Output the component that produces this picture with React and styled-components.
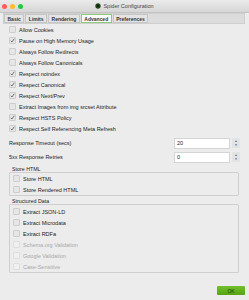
import styled, { createGlobalStyle } from "styled-components";

const Global = createGlobalStyle`
  html, body { margin: 0; padding: 0; background: #ececec; }
  body { font-family: "Liberation Sans", Arial, sans-serif; color: #222; }
`;

const Window = styled.div`
  width: 249px;
  height: 300px;
  background: #ececec;
  display: flex;
  flex-direction: column;
  overflow: hidden;
  font-size: 5.5px;
`;

const TitleBar = styled.div`
  height: 12px;
  display: flex;
  align-items: center;
  position: relative;
  background: linear-gradient(#ebebeb, #d6d6d6);
  border-bottom: 1px solid #c4c4c4;
`;

const Lights = styled.div`
  display: flex;
  gap: 3px;
  padding-left: 2px;
`;

const Light = styled.span`
  width: 5px;
  height: 5px;
  border-radius: 50%;
  background: ${(p) => p.c};
`;

const Title = styled.div`
  position: absolute;
  left: 0;
  right: 0;
  display: flex;
  justify-content: center;
  align-items: center;
  gap: 2px;
  color: #444;
  font-size: 5.5px;
`;

const TabBar = styled.div`
  margin: 0 4px 0 3px;
  height: 9px;
  background: #dcdcdc;
  border: 1px solid #cfcfcf;
  display: flex;
`;

const Tab = styled.div`
  padding: 0 2.5px;
  display: flex;
  align-items: center;
  font-weight: bold;
  font-size: 5px;
  color: #333;
  border: 1px solid ${(p) => (p.active ? "#8fc97a" : "#c6c6c6")};
  background: ${(p) => (p.active ? "#fafafa" : "#e4e4e4")};
  margin-right: 1px;
`;

const Body = styled.div`
  padding: 0 9px;
  display: flex;
  flex-direction: column;
`;

const Row = styled.div`
  height: 11px;
  display: flex;
  align-items: center;
  gap: 3px;
  color: ${(p) => (p.disabled ? "#a8a8a8" : "#222")};
`;

const Box = styled.span`
  width: 5px;
  height: 5px;
  border: 1px solid ${(p) => (p.disabled ? "#dedede" : "#cdcdcd")};
  background: ${(p) => (p.disabled ? "#f0f0f0" : "#e6e6e6")};
  border-radius: 1px;
  display: flex;
  align-items: center;
  justify-content: center;
  flex-shrink: 0;
`;

const FieldRow = styled.div`
  height: 14px;
  display: flex;
  align-items: center;
  justify-content: space-between;
  margin-top: ${(p) => (p.first ? "2px" : "0")};
`;

const Spin = styled.div`
  display: flex;
  align-items: center;
  gap: 2px;
`;

const Input = styled.div`
  width: 52px;
  height: 9px;
  background: #fff;
  border: 1px solid #d4d4d4;
  display: flex;
  align-items: center;
  padding-left: 2px;
`;

const Stepper = styled.div`
  width: 8px;
  height: 10px;
  background: #e3e3e3;
  border-radius: 1px;
  display: flex;
  flex-direction: column;
  align-items: center;
  justify-content: center;
  font-size: 3px;
  line-height: 4px;
  color: #555;
`;

const Group = styled.div`
  margin-top: 3px;
  display: flex;
  flex-direction: column;
`;

const Legend = styled.div`
  font-size: 5.3px;
  padding-left: 3px;
  height: 5px;
  line-height: 5px;
`;

const Frame = styled.div`
  border: 1px solid #cfcfcf;
  border-radius: 1px;
  padding: ${(p) => p.pad || "1px 0 0 3px"};
  margin-right: 1px;
`;

const Footer = styled.div`
  display: flex;
  justify-content: flex-end;
  padding: 13px 4px 0 0;
`;

const OkButton = styled.div`
  width: 28px;
  height: 9px;
  background: linear-gradient(#72c02c, #55a313);
  border-radius: 1px;
  display: flex;
  align-items: center;
  justify-content: center;
  color: #1e3a08;
  font-size: 5px;
`;

const Check = () => (
  <svg width="5" height="5" viewBox="0 0 10 10">
    <path d="M1.5 5.5 L4 8 L8.5 1.5" fill="none" stroke="#333" strokeWidth="1.3" />
  </svg>
);

const CheckRow = ({ label, checked, disabled }) => (
  <Row disabled={disabled}>
    <Box disabled={disabled}>{checked && <Check />}</Box>
    {label}
  </Row>
);

const main = [
  ["Allow Cookies", false],
  ["Pause on High Memory Usage", true],
  ["Always Follow Redirects", false],
  ["Always Follow Canonicals", false],
  ["Respect noindex", true],
  ["Respect Canonical", true],
  ["Respect Next/Prev", true],
  ["Extract Images from img srcset Attribute", false],
  ["Respect HSTS Policy", true],
  ["Respect Self Referencing Meta Refresh", true],
];

const Spinner = ({ value }) => (
  <Spin>
    <Input>{value}</Input>
    <Stepper>
      <span>▲</span>
      <span>▼</span>
    </Stepper>
  </Spin>
);

const App = () => (
  <Window>
    <Global />
    <TitleBar>
      <Lights>
        <Light c="#fc5f57" />
        <Light c="#fdbc2e" />
        <Light c="#28c840" />
      </Lights>
      <Title>
        <svg width="6" height="6" viewBox="0 0 10 10">
          <circle cx="5" cy="5" r="4.5" fill="#2f6b2a" />
          <path d="M5 1 L5 9 M1 5 L9 5 M2 2 L8 8 M8 2 L2 8" stroke="#111" strokeWidth="1.2" />
        </svg>
        Spider Configuration
      </Title>
    </TitleBar>
    <TabBar>
      <Tab>Basic</Tab>
      <Tab>Limits</Tab>
      <Tab>Rendering</Tab>
      <Tab active>Advanced</Tab>
      <Tab>Preferences</Tab>
    </TabBar>
    <Body>
      {main.map(([l, c]) => (
        <CheckRow key={l} label={l} checked={c} />
      ))}
      <FieldRow first>
        Response Timeout (secs)
        <Spinner value="20" />
      </FieldRow>
      <FieldRow>
        5xx Response Retries
        <Spinner value="0" />
      </FieldRow>
      <Group>
        <Legend>Store HTML</Legend>
        <Frame pad="0 0 0 3px">
          <CheckRow label="Store HTML" />
          <CheckRow label="Store Rendered HTML" />
        </Frame>
      </Group>
      <Group>
        <Legend>Structured Data</Legend>
        <Frame pad="1px 0 0 3px">
          <CheckRow label="Extract JSON-LD" />
          <CheckRow label="Extract Microdata" />
          <CheckRow label="Extract RDFa" />
          <CheckRow label="Schema.org Validation" disabled />
          <CheckRow label="Google Validation" disabled />
          <CheckRow label="Case-Sensitive" disabled />
        </Frame>
      </Group>
    </Body>
    <Footer>
      <OkButton>OK</OkButton>
    </Footer>
  </Window>
);

export default App;
